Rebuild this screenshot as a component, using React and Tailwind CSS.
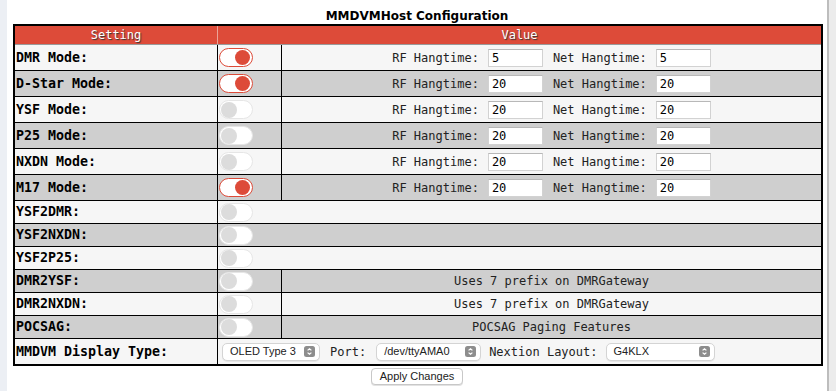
import React from "react";

const mono = "font-['DejaVu_Sans_Mono',monospace]";
const sans = "font-['Liberation_Sans',Arial,sans-serif]";

const rows = [
  { label: "DMR Mode:", on: true, rf: "5", net: "5" },
  { label: "D-Star Mode:", on: true, rf: "20", net: "20" },
  { label: "YSF Mode:", on: false, rf: "20", net: "20" },
  { label: "P25 Mode:", on: false, rf: "20", net: "20" },
  { label: "NXDN Mode:", on: false, rf: "20", net: "20" },
  { label: "M17 Mode:", on: true, rf: "20", net: "20" },
  { label: "YSF2DMR:", on: false, span: true },
  { label: "YSF2NXDN:", on: false, span: true },
  { label: "YSF2P25:", on: false, span: true },
  { label: "DMR2YSF:", on: false, note: "Uses 7 prefix on DMRGateway" },
  { label: "DMR2NXDN:", on: false, note: "Uses 7 prefix on DMRGateway" },
  { label: "POCSAG:", on: false, note: "POCSAG Paging Features" },
];

function Toggle({ on }) {
  return on ? (
    <div className="flex h-[19px] w-[34px] items-center justify-end rounded-full border border-[#dd4b39] bg-white pr-[2px]">
      <div className="h-[15px] w-[15px] rounded-full bg-[#dd4b39]" />
    </div>
  ) : (
    <div className="flex h-[19px] w-[34px] items-center rounded-full border border-[#e6e6e6] bg-white pl-[1px]">
      <div className="h-[16px] w-[16px] rounded-full bg-[#dcdcdc]" />
    </div>
  );
}

function NumInput({ value }) {
  return (
    <div className="flex h-[18px] w-[55px] items-center border border-[#d2d2d2] border-t-[#b8b8b8] bg-white pl-[3px] text-[12px] text-black">
      {value}
    </div>
  );
}

function Select({ value, w }) {
  return (
    <div
      className={`flex h-[18px] items-center justify-between rounded-[5px] border border-[#d4d4d4] bg-white pl-[7px] pr-[4px] text-[11px] text-[#222] shadow-[0_1px_0_#e6e6e6] ${sans} ${w}`}
    >
      <span>{value}</span>
      <svg width="11" height="11" viewBox="0 0 11 11">
        <rect x="0" y="0" width="11" height="11" rx="2.5" fill="#8d8d8d" />
        <path d="M3.6 4.4 L5.5 2.7 L7.4 4.4" stroke="#fff" strokeWidth="1.2" fill="none" />
        <path d="M3.6 6.6 L5.5 8.3 L7.4 6.6" stroke="#fff" strokeWidth="1.2" fill="none" />
      </svg>
    </div>
  );
}

export default function App() {
  return (
    <div className="flex h-screen w-full bg-white">
      {/* left page strip */}
      <div className="w-[7px] bg-[#eceff4]" />

      <div className="flex-1">
        <div className="h-[24px] pt-[8px] text-center text-[12px] font-bold leading-[16px] text-black font-['DejaVu_Sans',Verdana,sans-serif]">
          MMDVMHost Configuration
        </div>

        <div className={`ml-[6px] w-[810px] border-2 border-black ${mono}`}>
          {/* header */}
          <div className="flex h-[19px] border-b border-[#9a9a9a] bg-[#dd4b39] text-[12px] text-white [text-shadow:1px_1px_1px_#333]">
            <div className="flex w-[203px] items-center justify-center border-r border-[#eba397]">Setting</div>
            <div className="flex flex-1 items-center justify-center">Value</div>
          </div>

          {rows.map((r, i) => {
            const bg = i % 2 === 0 ? "bg-[#f6f6f6]" : "bg-[#cfcfcf]";
            const h = r.rf ? "h-[26px]" : "h-[23px]";
            return (
              <div key={r.label} className={`flex border-b border-black ${bg} ${h}`}>
                <div className="flex w-[203px] items-center border-r border-black pl-[1px] text-[13.3px] font-bold text-black">
                  {r.label}
                </div>
                {r.span ? (
                  <div className="flex flex-1 items-center pl-[1px]">
                    <Toggle on={r.on} />
                  </div>
                ) : (
                  <>
                    <div className="flex w-[64px] items-center border-r border-black pl-[1px]">
                      <Toggle on={r.on} />
                    </div>
                    <div className="flex flex-1 items-center justify-center text-[12px] text-[#222]">
                      {r.rf ? (
                        <>
                          <span>RF Hangtime:</span>
                          <span className="ml-[9px]"><NumInput value={r.rf} /></span>
                          <span className="ml-[10px]">Net Hangtime:</span>
                          <span className="ml-[9px]"><NumInput value={r.net} /></span>
                        </>
                      ) : (
                        <span>{r.note}</span>
                      )}
                    </div>
                  </>
                )}
              </div>
            );
          })}

          {/* display row */}
          <div className="flex h-[25px] bg-[#f6f6f6]">
            <div className="flex w-[203px] items-center border-r border-black pl-[1px] text-[13.3px] font-bold text-black">
              MMDVM Display Type:
            </div>
            <div className="flex flex-1 items-center pl-[4px] text-[12px] text-[#222]">
              <Select value="OLED Type 3" w="w-[98px]" />
              <span className="ml-[10px]">Port:</span>
              <span className="ml-[10px]"><Select value="/dev/ttyAMA0" w="w-[105px]" /></span>
              <span className="ml-[8px]">Nextion Layout:</span>
              <span className="ml-[8px]"><Select value="G4KLX" w="w-[109px]" /></span>
            </div>
          </div>
        </div>

        <div className="mt-[2px] flex justify-center">
          <button
            className={`h-[17px] rounded-[4px] border border-[#c8c8c8] bg-white px-[8px] text-[11px] leading-[15px] text-[#222] shadow-[0_1px_0_#e2e2e2] ${sans}`}
          >
            Apply Changes
          </button>
        </div>
      </div>

      {/* scrollbar */}
      <div className="w-[9px] border-l-2 border-[#bdbdbd] bg-[#ececec]" />
    </div>
  );
}
